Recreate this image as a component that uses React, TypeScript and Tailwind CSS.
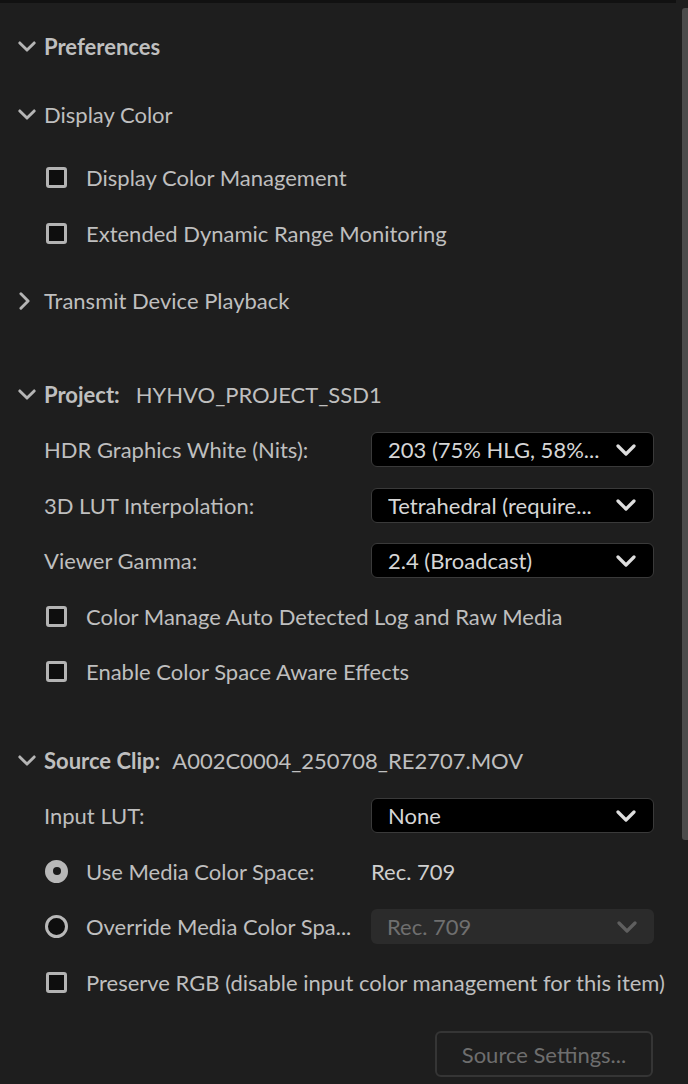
import React from 'react';

const FONT = { fontFamily: 'Lato, "Open Sans", "Liberation Sans", sans-serif' };

function ChevronDown({ className = '' }: { className?: string }) {
    return (
        <svg viewBox="0 0 20 12" className={className} fill="none" stroke="currentColor" strokeWidth="3.2" strokeLinecap="round" strokeLinejoin="round">
            <path d="M2 2l8 8 8-8" />
        </svg>
    );
}

function ChevronRight({ className = '' }: { className?: string }) {
    return (
        <svg viewBox="0 0 12 20" className={className} fill="none" stroke="currentColor" strokeWidth="3.2" strokeLinecap="round" strokeLinejoin="round">
            <path d="M2 2l8 8-8 8" />
        </svg>
    );
}

function Checkbox() {
    return <span className="block w-[21px] h-[21px] rounded-[3px] border-[3px] border-[#b3b3b3] bg-[#0e0e0e] shrink-0" />;
}

function Radio({ checked }: { checked?: boolean }) {
    return (
        <span className={`flex items-center justify-center w-[23px] h-[23px] rounded-full border-[3px] border-[#b8b8b8] shrink-0 ${checked ? 'bg-[#b8b8b8]' : 'bg-[#0e0e0e]'}`}>
            {checked && <span className="block w-[8px] h-[8px] rounded-full bg-[#1a1a1a]" />}
        </span>
    );
}

function SectionHeader({ title, value, open = true, bold = false, gap = 'ml-[16px]' }: { title: string; value?: string; open?: boolean; bold?: boolean; gap?: string }) {
    return (
        <div className="flex items-center h-[55.5px] pl-[18px]">
            <span className="w-[26px] flex items-center">
                {open
                    ? <ChevronDown className="w-[18px] h-[11px] text-[#b5b5b5]" />
                    : <ChevronRight className="w-[11px] h-[18px] ml-[1px] text-[#b5b5b5]" />}
            </span>
            <span className={`text-[22px] text-[#bfbfbf] ${bold ? 'font-bold' : ''}`}>{title}</span>
            {value && <span className={`${gap} text-[22px] text-[#bfbfbf]`}>{value}</span>}
        </div>
    );
}

function CheckRow({ label }: { label: string }) {
    return (
        <div className="flex items-center h-[55.5px] pl-[46px]">
            <Checkbox />
            <span className="ml-[19px] text-[22px] text-[#bfbfbf] whitespace-nowrap">{label}</span>
        </div>
    );
}

function Dropdown({ value, disabled = false }: { value: string; disabled?: boolean }) {
    return (
        <div className={`w-[283px] h-[35px] rounded-[6px] flex items-center justify-between pl-[16px] pr-[17px] ${disabled ? 'bg-[#2b2b2b] text-[#6f6f6f]' : 'bg-black border border-[#3a3a3a] text-[#d6d6d6]'}`}>
            <span className="text-[22px] truncate">{value}</span>
            <ChevronDown className={`w-[20px] h-[12px] shrink-0 ${disabled ? 'text-[#5f5f5f]' : 'text-[#dedede]'}`} />
        </div>
    );
}

function SelectRow({ label, value }: { label: string; value: string }) {
    return (
        <div className="flex items-center h-[55.5px] pl-[44px]">
            <span className="w-[327px] text-[22px] text-[#bfbfbf] whitespace-nowrap">{label}</span>
            <Dropdown value={value} />
        </div>
    );
}

export default function App() {
    return (
        <div className="relative w-[688px] h-[1084px] overflow-hidden bg-[#1e1e1e]" style={FONT}>
            {/* top edge strip */}
            <div className="h-[3px] w-[676px] bg-[#111111]" />

            {/* scrollbar */}
            <div className="absolute right-0 top-[8px] w-[6px] h-[832px] rounded-l-[3px] bg-[#4b4b4b]" />

            <div className="pt-[16px]">
                <SectionHeader title="Preferences" bold />

                <div className="mt-[12px]">
                    <SectionHeader title="Display Color" />
                </div>
                <div className="mt-[8px]">
                    <CheckRow label="Display Color Management" />
                    <CheckRow label="Extended Dynamic Range Monitoring" />
                </div>
                <div className="mt-[12px]">
                    <SectionHeader title="Transmit Device Playback" open={false} />
                </div>

                {/* Project */}
                <div className="mt-[38px]">
                    <SectionHeader title="Project:" value="HYHVO_PROJECT_SSD1" bold />
                    <SelectRow label="HDR Graphics White (Nits):" value="203 (75% HLG, 58%..." />
                    <SelectRow label="3D LUT Interpolation:" value="Tetrahedral (require..." />
                    <SelectRow label="Viewer Gamma:" value="2.4 (Broadcast)" />
                    <CheckRow label="Color Manage Auto Detected Log and Raw Media" />
                    <CheckRow label="Enable Color Space Aware Effects" />
                </div>

                {/* Source Clip */}
                <div className="mt-[33px]">
                    <SectionHeader title="Source Clip:" value="A002C0004_250708_RE2707.MOV" bold gap="ml-[12px]" />
                    <SelectRow label="Input LUT:" value="None" />
                    <div className="flex items-center h-[55.5px] pl-[45px]">
                        <Radio checked />
                        <span className="w-[285px] ml-[18px] text-[22px] text-[#bfbfbf] whitespace-nowrap">Use Media Color Space:</span>
                        <span className="text-[22px] text-[#cfcfcf]">Rec. 709</span>
                    </div>
                    <div className="flex items-center h-[55.5px] pl-[45px]">
                        <Radio />
                        <span className="w-[285px] ml-[18px] text-[22px] text-[#bfbfbf] whitespace-nowrap">Override Media Color Spa...</span>
                        <Dropdown value="Rec. 709" disabled />
                    </div>
                    <CheckRow label="Preserve RGB (disable input color management for this item)" />
                </div>

                <div className="flex justify-end pr-[35px] mt-[21px]">
                    <button className="w-[218px] h-[46px] rounded-[6px] border-2 border-[#353535] text-[22px] text-[#6e6e6e]">
                        Source Settings...
                    </button>
                </div>
            </div>
        </div>
    );
}
